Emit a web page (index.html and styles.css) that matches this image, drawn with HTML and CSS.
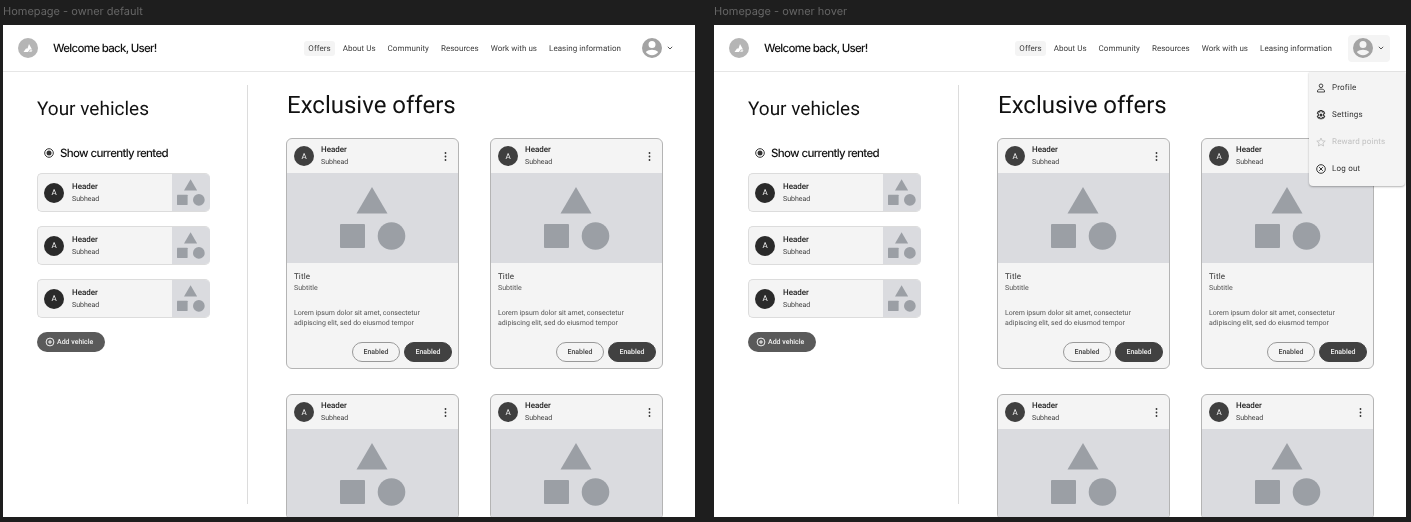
FILE: index.html
```html
<!DOCTYPE html>
<html lang="en">
<head>
    <meta charset="UTF-8">
    <title>Homepage</title>
    <link rel="stylesheet" href="styles.css">
</head>
<body>
<svg class="defs" width="0" height="0">
    <symbol id="logo" viewBox="0 0 20 20">
        <circle cx="10" cy="10" r="10" fill="#b5b5b5"/>
        <path d="M11 6l3 5.500h-2.300l-1.700 2.500h-4.500l2.500-3.500h1.500z" fill="#fff"/>
        <path d="M12 12h2.500l-1 2h-2.500z" fill="#e8e8e8"/>
    </symbol>
    <symbol id="user" viewBox="0 0 20 20">
        <path d="M10 0a10 10 0 1 0 0 20a10 10 0 0 0 0-20zM10 3a3.500 3.500 0 1 1 0 7a3.500 3.500 0 0 1 0-7zM10 17.200c-2.600 0-4.900-1.200-6.200-3.100c1.500-1.600 4-2.400 6.200-2.400s4.700 .8 6.200 2.400c-1.300 1.900-3.600 3.100-6.200 3.100z" fill="#a3a3a3" fill-rule="evenodd"/>
    </symbol>
    <symbol id="chevron" viewBox="0 0 8 8">
        <path d="M1.800 2.800L4 5L6.200 2.800" fill="none" stroke="#444" stroke-width=".9"/>
    </symbol>
    <symbol id="radio" viewBox="0 0 10 10">
        <circle cx="5" cy="5" r="4.300" fill="none" stroke="#333" stroke-width="1"/>
        <circle cx="5" cy="5" r="2.500" fill="#333"/>
    </symbol>
    <symbol id="more" viewBox="0 0 3 9">
        <circle cx="1.500" cy="1" r=".9" fill="#333"/>
        <circle cx="1.500" cy="4.500" r=".9" fill="#333"/>
        <circle cx="1.500" cy="8" r=".9" fill="#333"/>
    </symbol>
    <symbol id="plus" viewBox="0 0 10 10">
        <circle cx="5" cy="5" r="3.900" fill="none" stroke="#fff" stroke-width=".9"/>
        <path d="M5 3v4M3 5h4" stroke="#fff" stroke-width=".9"/>
    </symbol>
    <symbol id="shapes" viewBox="0 0 66 63">
        <path d="M16.500 26.500L32 0L47.500 26.500z" fill="#9b9fa5"/>
        <rect x="0" y="37" width="25" height="24" rx="1" fill="#9b9fa5"/>
        <circle cx="51.500" cy="49" r="13.800" fill="#9b9fa5"/>
    </symbol>
    <symbol id="i-profile" viewBox="0 0 10 10">
        <circle cx="5" cy="2.800" r="1.800" fill="none" stroke="#333" stroke-width=".9"/>
        <path d="M1.500 9v-1.200c0-1 1.700-1.700 3.500-1.700s3.500 .7 3.500 1.700v1.200z" fill="none" stroke="#333" stroke-width=".9"/>
    </symbol>
    <symbol id="i-settings" viewBox="0 0 10 10">
        <path d="M4 .6h2l.3 1.300l1.300-.5l1 1.700l-1 .9v1.400l1 .9l-1 1.700l-1.300-.5l-.3 1.300h-2l-.3-1.300l-1.300 .5l-1-1.700l1-.9v-1.400l-1-.9l1-1.700l1.300 .5z" fill="none" stroke="#333" stroke-width="1.100"/>
        <circle cx="5" cy="5" r="1.500" fill="#333"/>
    </symbol>
    <symbol id="i-star" viewBox="0 0 10 10">
        <path d="M5 1l1.200 2.800l3 .3l-2.300 2l.7 2.900l-2.600-1.500l-2.600 1.500l.7-2.900l-2.300-2l3-.3z" fill="none" stroke="#c4c4c4" stroke-width=".9"/>
    </symbol>
    <symbol id="i-logout" viewBox="0 0 10 10">
        <circle cx="5" cy="5" r="4.300" fill="none" stroke="#333" stroke-width="1"/>
        <path d="M3.200 3.200l3.600 3.600M6.800 3.200l-3.600 3.600" stroke="#333" stroke-width="1"/>
    </symbol>
</svg>

<div class="boards">

    <!-- owner default -->
    <div class="board">
        <div class="board-label">Homepage - owner default</div>
        <div class="frame">
            <header class="topbar">
                <svg class="logo"><use href="#logo"/></svg>
                <div class="welcome">Welcome back, User!</div>
                <nav class="nav">
                    <a class="nav-item active">Offers</a>
                    <a class="nav-item">About Us</a>
                    <a class="nav-item">Community</a>
                    <a class="nav-item">Resources</a>
                    <a class="nav-item">Work with us</a>
                    <a class="nav-item">Leasing information</a>
                </nav>
                <div class="user-btn">
                    <svg class="user-icon"><use href="#user"/></svg>
                    <svg class="chevron"><use href="#chevron"/></svg>
                </div>
            </header>
            <div class="content">
                <aside class="side">
                    <h2 class="side-title">Your vehicles</h2>
                    <div class="rented">
                        <svg class="radio"><use href="#radio"/></svg>
                        <span>Show currently rented</span>
                    </div>
                    <div class="vehicle">
                        <div class="avatar dark">A</div>
                        <div class="vehicle-text"><div class="head-name">Header</div><div class="head-sub">Subhead</div></div>
                        <div class="vehicle-media"><svg class="shapes-small"><use href="#shapes"/></svg></div>
                    </div>
                    <div class="vehicle">
                        <div class="avatar dark">A</div>
                        <div class="vehicle-text"><div class="head-name">Header</div><div class="head-sub">Subhead</div></div>
                        <div class="vehicle-media"><svg class="shapes-small"><use href="#shapes"/></svg></div>
                    </div>
                    <div class="vehicle">
                        <div class="avatar dark">A</div>
                        <div class="vehicle-text"><div class="head-name">Header</div><div class="head-sub">Subhead</div></div>
                        <div class="vehicle-media"><svg class="shapes-small"><use href="#shapes"/></svg></div>
                    </div>
                    <a class="add-btn"><svg class="plus"><use href="#plus"/></svg>Add vehicle</a>
                </aside>
                <main class="offers">
                    <h1 class="offers-title">Exclusive offers</h1>
                    <div class="offer-grid">
                        <div class="offer">
                            <div class="offer-head">
                                <div class="avatar">A</div>
                                <div class="offer-head-text"><div class="head-name">Header</div><div class="head-sub">Subhead</div></div>
                                <svg class="more"><use href="#more"/></svg>
                            </div>
                            <div class="offer-media"><svg class="shapes"><use href="#shapes"/></svg></div>
                            <div class="offer-body">
                                <div class="offer-title">Title</div>
                                <div class="offer-sub">Subtitle</div>
                                <p class="offer-text">Lorem ipsum dolor sit amet, consectetur adipiscing elit, sed do eiusmod tempor</p>
                                <div class="offer-actions"><a class="btn">Enabled</a><a class="btn filled">Enabled</a></div>
                            </div>
                        </div>
                        <div class="offer">
                            <div class="offer-head">
                                <div class="avatar">A</div>
                                <div class="offer-head-text"><div class="head-name">Header</div><div class="head-sub">Subhead</div></div>
                                <svg class="more"><use href="#more"/></svg>
                            </div>
                            <div class="offer-media"><svg class="shapes"><use href="#shapes"/></svg></div>
                            <div class="offer-body">
                                <div class="offer-title">Title</div>
                                <div class="offer-sub">Subtitle</div>
                                <p class="offer-text">Lorem ipsum dolor sit amet, consectetur adipiscing elit, sed do eiusmod tempor</p>
                                <div class="offer-actions"><a class="btn">Enabled</a><a class="btn filled">Enabled</a></div>
                            </div>
                        </div>
                        <div class="offer">
                            <div class="offer-head">
                                <div class="avatar">A</div>
                                <div class="offer-head-text"><div class="head-name">Header</div><div class="head-sub">Subhead</div></div>
                                <svg class="more"><use href="#more"/></svg>
                            </div>
                            <div class="offer-media"><svg class="shapes"><use href="#shapes"/></svg></div>
                        </div>
                        <div class="offer">
                            <div class="offer-head">
                                <div class="avatar">A</div>
                                <div class="offer-head-text"><div class="head-name">Header</div><div class="head-sub">Subhead</div></div>
                                <svg class="more"><use href="#more"/></svg>
                            </div>
                            <div class="offer-media"><svg class="shapes"><use href="#shapes"/></svg></div>
                        </div>
                    </div>
                </main>
            </div>
        </div>
    </div>

    <!-- owner hover -->
    <div class="board">
        <div class="board-label">Homepage - owner hover</div>
        <div class="frame">
            <header class="topbar">
                <svg class="logo"><use href="#logo"/></svg>
                <div class="welcome">Welcome back, User!</div>
                <nav class="nav">
                    <a class="nav-item active">Offers</a>
                    <a class="nav-item">About Us</a>
                    <a class="nav-item">Community</a>
                    <a class="nav-item">Resources</a>
                    <a class="nav-item">Work with us</a>
                    <a class="nav-item">Leasing information</a>
                </nav>
                <div class="user-btn hover">
                    <svg class="user-icon"><use href="#user"/></svg>
                    <svg class="chevron"><use href="#chevron"/></svg>
                </div>
            </header>
            <div class="menu">
                <a class="menu-item"><svg class="menu-icon"><use href="#i-profile"/></svg>Profile</a>
                <a class="menu-item"><svg class="menu-icon"><use href="#i-settings"/></svg>Settings</a>
                <a class="menu-item disabled"><svg class="menu-icon"><use href="#i-star"/></svg>Reward points</a>
                <a class="menu-item"><svg class="menu-icon"><use href="#i-logout"/></svg>Log out</a>
            </div>
            <div class="content">
                <aside class="side">
                    <h2 class="side-title">Your vehicles</h2>
                    <div class="rented">
                        <svg class="radio"><use href="#radio"/></svg>
                        <span>Show currently rented</span>
                    </div>
                    <div class="vehicle">
                        <div class="avatar dark">A</div>
                        <div class="vehicle-text"><div class="head-name">Header</div><div class="head-sub">Subhead</div></div>
                        <div class="vehicle-media"><svg class="shapes-small"><use href="#shapes"/></svg></div>
                    </div>
                    <div class="vehicle">
                        <div class="avatar dark">A</div>
                        <div class="vehicle-text"><div class="head-name">Header</div><div class="head-sub">Subhead</div></div>
                        <div class="vehicle-media"><svg class="shapes-small"><use href="#shapes"/></svg></div>
                    </div>
                    <div class="vehicle">
                        <div class="avatar dark">A</div>
                        <div class="vehicle-text"><div class="head-name">Header</div><div class="head-sub">Subhead</div></div>
                        <div class="vehicle-media"><svg class="shapes-small"><use href="#shapes"/></svg></div>
                    </div>
                    <a class="add-btn"><svg class="plus"><use href="#plus"/></svg>Add vehicle</a>
                </aside>
                <main class="offers">
                    <h1 class="offers-title">Exclusive offers</h1>
                    <div class="offer-grid">
                        <div class="offer">
                            <div class="offer-head">
                                <div class="avatar">A</div>
                                <div class="offer-head-text"><div class="head-name">Header</div><div class="head-sub">Subhead</div></div>
                                <svg class="more"><use href="#more"/></svg>
                            </div>
                            <div class="offer-media"><svg class="shapes"><use href="#shapes"/></svg></div>
                            <div class="offer-body">
                                <div class="offer-title">Title</div>
                                <div class="offer-sub">Subtitle</div>
                                <p class="offer-text">Lorem ipsum dolor sit amet, consectetur adipiscing elit, sed do eiusmod tempor</p>
                                <div class="offer-actions"><a class="btn">Enabled</a><a class="btn filled">Enabled</a></div>
                            </div>
                        </div>
                        <div class="offer">
                            <div class="offer-head">
                                <div class="avatar">A</div>
                                <div class="offer-head-text"><div class="head-name">Header</div><div class="head-sub">Subhead</div></div>
                                <svg class="more"><use href="#more"/></svg>
                            </div>
                            <div class="offer-media"><svg class="shapes"><use href="#shapes"/></svg></div>
                            <div class="offer-body">
                                <div class="offer-title">Title</div>
                                <div class="offer-sub">Subtitle</div>
                                <p class="offer-text">Lorem ipsum dolor sit amet, consectetur adipiscing elit, sed do eiusmod tempor</p>
                                <div class="offer-actions"><a class="btn">Enabled</a><a class="btn filled">Enabled</a></div>
                            </div>
                        </div>
                        <div class="offer">
                            <div class="offer-head">
                                <div class="avatar">A</div>
                                <div class="offer-head-text"><div class="head-name">Header</div><div class="head-sub">Subhead</div></div>
                                <svg class="more"><use href="#more"/></svg>
                            </div>
                            <div class="offer-media"><svg class="shapes"><use href="#shapes"/></svg></div>
                        </div>
                        <div class="offer">
                            <div class="offer-head">
                                <div class="avatar">A</div>
                                <div class="offer-head-text"><div class="head-name">Header</div><div class="head-sub">Subhead</div></div>
                                <svg class="more"><use href="#more"/></svg>
                            </div>
                            <div class="offer-media"><svg class="shapes"><use href="#shapes"/></svg></div>
                        </div>
                    </div>
                </main>
            </div>
        </div>
    </div>

</div>
</body>
</html>
```

FILE: styles.css
```css
* {
    margin: 0;
    padding: 0;
    box-sizing: border-box;
}

html, body {
    height: 100%;
    overflow: hidden;
}

body {
    background-color: #1e1e1e;
    font-family: "Roboto", "Liberation Sans", sans-serif;
    color: #1d1d1d;
    text-rendering: geometricPrecision;
}

.defs {
    position: absolute;
}

/* two frames side by side */
.boards {
    display: flex;
    gap: 19px;
    padding-left: 3px;
    will-change: transform;
}

.board {
    width: 692px;
}

.board-label {
    height: 25px;
    font-family: "Inter", sans-serif;
    font-size: 11px;
    line-height: 22px;
    color: #666;
}

.frame {
    position: relative;
    height: 492px;
    background-color: #fff;
    overflow: hidden;
}

/* top bar */
.topbar {
    display: flex;
    align-items: center;
    height: 47px;
    padding: 0 16px 0 15px;
    border-bottom: 1px solid #e6e6e6;
}

.logo {
    width: 20px;
    height: 20px;
    margin-right: 15px;
}

.welcome {
    font-family: "Inter", sans-serif;
    font-size: 11.5px;
    font-weight: 500;
    letter-spacing: -.7px;
    color: #111;
}

.nav {
    display: flex;
    align-items: center;
    gap: 4px;
    margin-left: auto;
    margin-right: 12px;
}

.nav-item {
    padding: 0 4px;
    height: 15px;
    line-height: 15px;
    font-size: 8px;
    letter-spacing: .04px;
    color: #3c3c3c;
    border-radius: 3px;
}

.nav-item.active {
    background-color: #f4f4f4;
}

.user-btn {
    display: flex;
    align-items: center;
    gap: 4px;
    width: 42px;
    height: 27px;
    padding-left: 5px;
    border-radius: 4px;
}

.user-btn.hover {
    background-color: #f4f4f4;
}

.user-icon {
    width: 20px;
    height: 20px;
}

.chevron {
    width: 8px;
    height: 8px;
}

/* dropdown */
.menu {
    position: absolute;
    top: 47px;
    right: 1px;
    width: 96px;
    height: 114px;
    padding: 2px 0;
    background-color: #f4f4f4;
    border-radius: 0 0 4px 4px;
    box-shadow: 0 1px 2px rgba(0, 0, 0, .3);
    z-index: 2;
}

.menu-item {
    display: flex;
    align-items: center;
    gap: 6px;
    height: 27px;
    padding-left: 7px;
    font-size: 8px;
    letter-spacing: .2px;
    color: #333;
}

.menu-item.disabled {
    color: #c2c2c2;
}

.menu-icon {
    width: 10px;
    height: 10px;
}

/* body */
.content {
    display: flex;
    padding-top: 13px;
}

.side {
    width: 245px;
    height: 419px;
    padding-left: 34px;
    border-right: 1px solid #dcdcdc;
}

.side-title {
    margin-top: 10px;
    font-size: 19px;
    font-weight: 400;
    line-height: 27px;
    color: #111;
}

.rented {
    display: flex;
    align-items: center;
    gap: 6px;
    margin: 22px 0 11px 7px;
    height: 18px;
    font-family: "Inter", sans-serif;
    font-size: 11.5px;
    font-weight: 500;
    letter-spacing: -.66px;
    color: #111;
}

.radio {
    width: 10px;
    height: 10px;
}

.vehicle {
    display: flex;
    align-items: center;
    width: 173px;
    height: 39px;
    margin-bottom: 14px;
    padding-left: 6px;
    background-color: #f4f4f4;
    border: 1px solid #dcdcdc;
    border-right: 0;
    border-radius: 5px;
    overflow: hidden;
}

.vehicle-text {
    margin-left: 8px;
}

.vehicle-media {
    display: flex;
    align-items: center;
    justify-content: center;
    width: 38px;
    height: 39px;
    margin: -1px 0;
    margin-left: auto;
    background-color: #dadbdf;
}

.shapes-small {
    width: 28px;
    height: 27px;
}

.avatar {
    display: flex;
    align-items: center;
    justify-content: center;
    flex: none;
    width: 20px;
    height: 20px;
    border-radius: 50%;
    background-color: #3f3f3f;
    color: #eee;
    font-size: 8px;
}

.avatar.dark {
    background-color: #2a2a2a;
}

.head-name {
    font-size: 8px;
    font-weight: 500;
    line-height: 13px;
    color: #222;
}

.head-sub {
    font-size: 7px;
    line-height: 13px;
    color: #3e3e3e;
}

.add-btn {
    display: flex;
    align-items: center;
    gap: 2px;
    width: 68px;
    height: 20px;
    margin-top: 1px;
    padding-left: 8px;
    background-color: #5a5a5a;
    border-radius: 10px;
    font-size: 7px;
    font-weight: 500;
    color: #eee;
}

.plus {
    width: 10px;
    height: 10px;
}

/* offers */
.offers {
    padding-left: 38px;
}

.offers-title {
    font-size: 24px;
    font-weight: 400;
    line-height: 40px;
    margin-left: 1px;
    margin-bottom: 13px;
    margin-top: -12px;
    padding-top: 12px;
    color: #111;
}

.offer-grid {
    display: grid;
    grid-template-columns: 173px 173px;
    column-gap: 31px;
    row-gap: 25px;
}

.offer {
    border: 1px solid #b4b4b4;
    border-radius: 6px;
    background-color: #f4f4f4;
    overflow: hidden;
}

.offer-head {
    display: flex;
    align-items: center;
    height: 34px;
    padding: 0 11px 0 7px;
}

.offer-head-text {
    margin-left: 7px;
}

.more {
    width: 3px;
    height: 9px;
    margin-left: auto;
}

.offer-media {
    display: flex;
    align-items: center;
    justify-content: center;
    height: 90px;
    background-color: #dadbdf;
}

.shapes {
    width: 66px;
    height: 63px;
    margin-top: 1px;
}

.offer-body {
    height: 105px;
    padding: 8px 6px 0 7px;
}

.offer-title {
    font-size: 8px;
    font-weight: 400;
    line-height: 11px;
    letter-spacing: .1px;
    color: #333;
}

.offer-sub {
    margin-top: 1px;
    font-size: 7px;
    line-height: 11px;
    color: #555;
}

.offer-text {
    margin-top: 14px;
    margin-right: 1px;
    font-size: 7px;
    line-height: 10px;
    color: #555;
}

.offer-actions {
    display: flex;
    justify-content: flex-end;
    gap: 4px;
    margin-top: 14px;
}

.btn {
    width: 48px;
    height: 20px;
    line-height: 18px;
    text-align: center;
    font-size: 7px;
    font-weight: 500;
    color: #444;
    border: 1px solid #999;
    border-radius: 10px;
}

.btn.filled {
    background-color: #414141;
    border-color: #414141;
    color: #eee;
}
```
